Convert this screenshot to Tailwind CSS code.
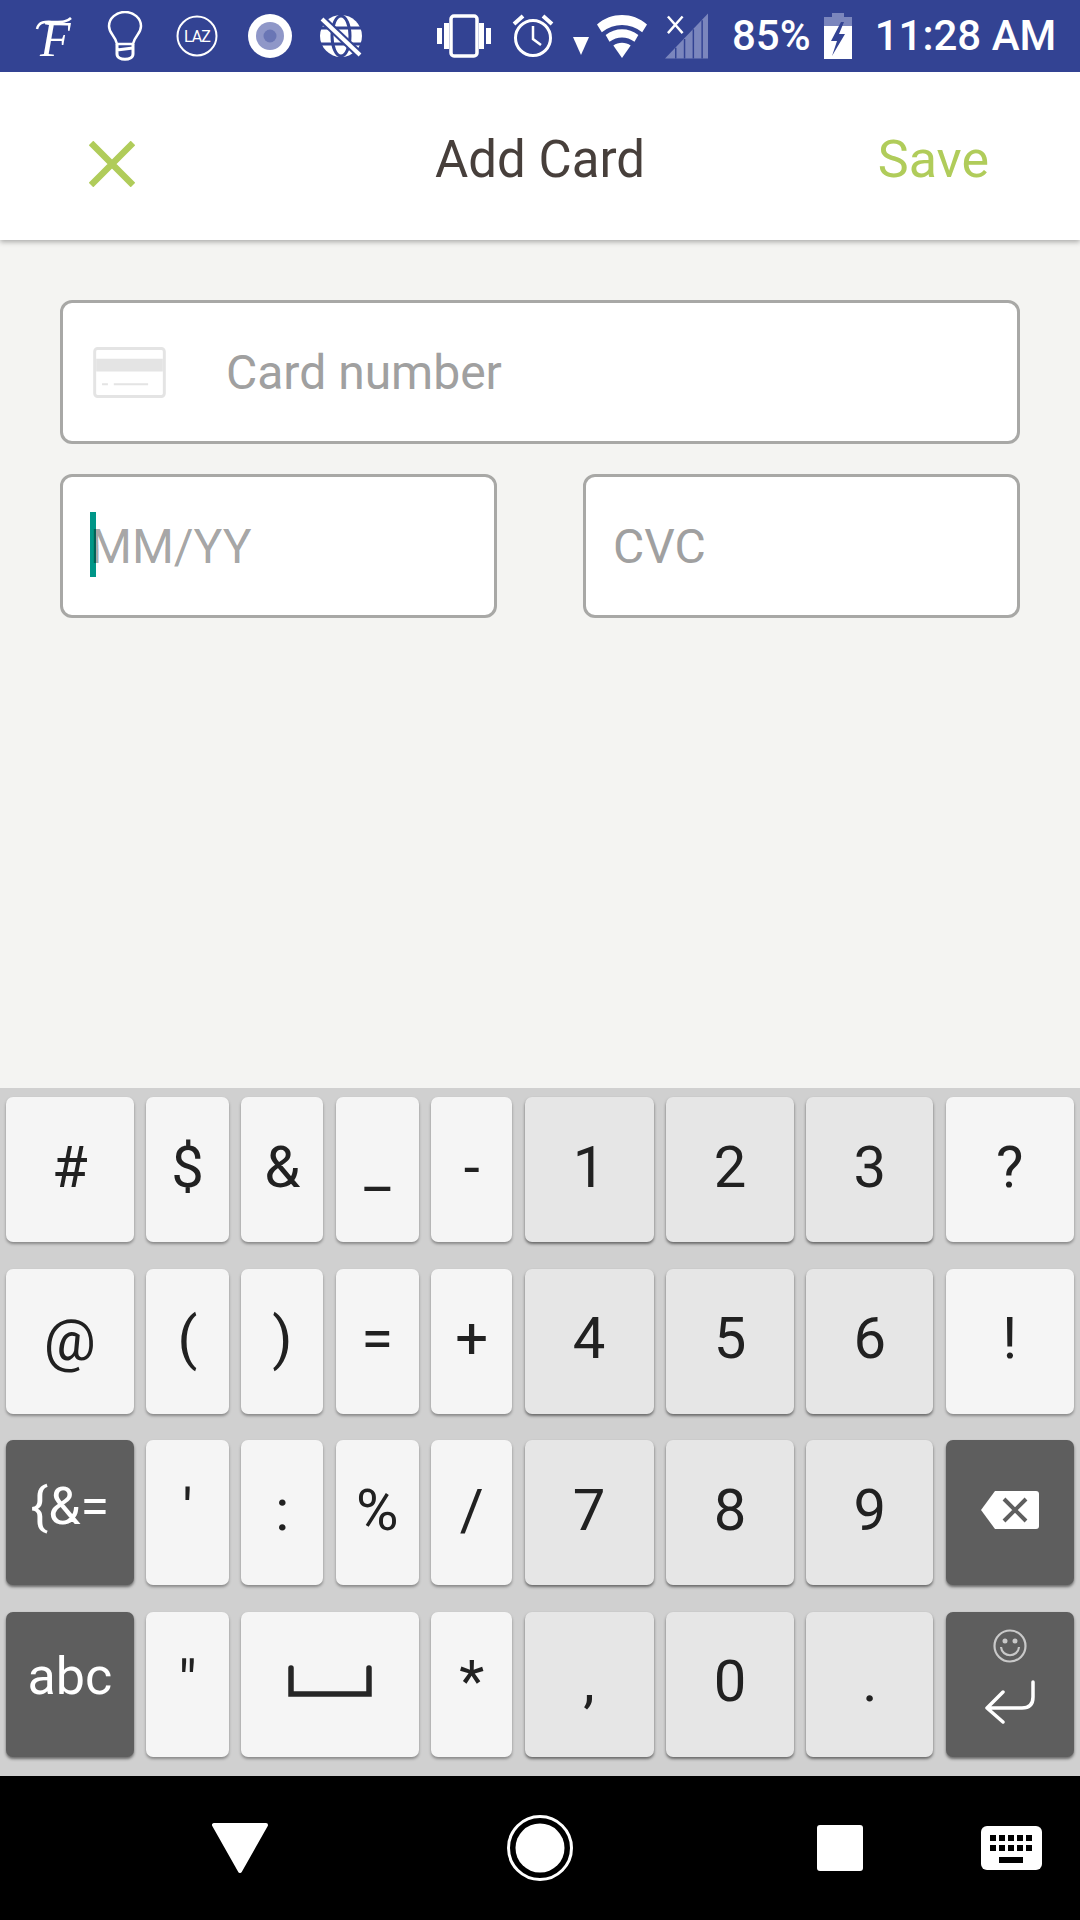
<!DOCTYPE html>
<html><head><meta charset="utf-8"><script src="https://cdn.jsdelivr.net/npm/@tailwindcss/browser@4"></script></head>
<body class="m-0 font-['Roboto',sans-serif]">
<div class="w-[1080px] h-[1920px] flex flex-col bg-[#f4f4f2] overflow-hidden">
  <!-- status bar -->
  <div class="h-[72px] bg-[#334393] flex items-center text-white relative z-20 shrink-0">
    <svg class="ml-[34px] mt-[6px]" width="44" height="60" viewBox="0 0 44 60"><text x="6" y="47" fill="#fff" font-family="Liberation Serif" font-style="italic" font-size="50">F</text><path d="M3 20C5 11 14 13 21 13C28 13 33 13 37 9" fill="none" stroke="#fff" stroke-width="2.5"/></svg>
    <svg class="ml-[28px]" width="38" height="50" viewBox="0 0 38 50" fill="none" stroke="#fff" stroke-width="3"><path d="M11 33C9 24 3 23 3 15A16 14 0 0 1 35 15C35 23 29 24 27 33Z" stroke-width="2.5"/><path d="M11 33V43C11 50 27 50 27 43V33M11 39L27 37"/></svg>
    <svg class="ml-[32px]" width="42" height="42" viewBox="0 0 42 42"><circle cx="21" cy="21" r="19.5" fill="none" stroke="#fff" stroke-width="2"/><text x="21" y="27" text-anchor="middle" fill="#fff" font-family="Roboto" font-size="16" letter-spacing="-1">LAZ</text></svg>
    <svg class="ml-[30px]" width="44" height="44" viewBox="0 0 44 44"><circle cx="22" cy="22" r="22" fill="#fff"/><circle cx="22" cy="22" r="14" fill="#8f97c8"/><circle cx="22" cy="22" r="6.5" fill="#6a76b5"/></svg>
    <svg class="ml-[27px]" width="44" height="44" viewBox="0 0 44 44"><circle cx="22" cy="22" r="21" fill="#fff"/><g fill="none" stroke="#334393" stroke-width="3"><ellipse cx="22" cy="22" rx="9" ry="20"/><path d="M2 14H42M2 30H42"/></g><path d="M3 5L41 41" stroke="#334393" stroke-width="8"/><path d="M3 5L41 41" stroke="#fff" stroke-width="4"/></svg>
    <svg class="ml-[74px]" width="54" height="44" viewBox="0 0 54 44"><rect x="14" y="2" width="26" height="40" rx="3" fill="none" stroke="#fff" stroke-width="3.5"/><path d="M0 14H5V30H0ZM7 9H12V35H7ZM42 9H47V35H42ZM49 14H54V30H49Z" fill="#fff"/></svg>
    <svg class="ml-[21px]" width="42" height="46" viewBox="0 0 42 46" fill="none" stroke="#fff" stroke-width="3"><circle cx="21" cy="25" r="17.5"/><path d="M21 13V26L29 32" stroke-width="2.5"/><path d="M2 11L11 3M40 11L31 3" stroke-width="4"/></svg>
    <svg class="ml-[19px] mt-[20px]" width="16" height="18" viewBox="0 0 16 18"><path d="M0 0H16L8 18Z" fill="#fff"/></svg>
    <svg class="ml-[8px]" width="50" height="46" viewBox="0 0 52 46"><path d="M0 11C15 -2 37 -2 52 11L47 19C34 9 18 9 5 19Z" fill="#fff"/><path d="M9 22C19 14 33 14 43 22L39 29C31 23 21 23 13 29Z" fill="#fff"/><path d="M17 33C22 29 30 29 35 33L26 46Z" fill="#fff"/></svg>
    <svg class="ml-[18px]" width="43" height="46" viewBox="0 0 44 46"><path d="M0 46L44 0V46Z" fill="#7b86bd"/><path d="M11 46V35M20 46V26M29 46V16M38 46V7" stroke="#334393" stroke-width="1.5"/><path d="M3 3L18 20M18 3L3 20" stroke="#fff" stroke-width="2.5"/></svg>
    <span class="ml-[24px] text-[42px] font-medium leading-none">85%</span>
    <svg class="ml-[13px]" width="28" height="46" viewBox="0 0 28 46"><path d="M8 0H20V4H28V13H0V4H8Z" fill="#7b86bd"/><path d="M0 13H28V46H0Z" fill="#fff"/><path d="M17 9L7 28H13L8 43L21 21H15L20 9Z" fill="#334393"/></svg>
    <span class="ml-[23px] text-[42px] font-medium leading-none whitespace-nowrap">11:28 AM</span>
  </div>
  <!-- header -->
  <div class="h-[168px] bg-white grid grid-cols-[1fr_auto_1fr] items-center shadow-[0_2px_5px_rgba(0,0,0,0.3)] relative z-10 shrink-0">
    <svg class="ml-[89px] mt-[16px]" width="46" height="46" viewBox="0 0 46 46"><path d="M2 2L44 44M44 2L2 44" stroke="#b0cc5a" stroke-width="6.5"/></svg>
    <span class="text-[51px] leading-none text-[#473f3b] mt-[6px]">Add Card</span>
    <span class="text-[52px] leading-none text-[#b0cc5a] justify-self-end mr-[91px] mt-[8px]">Save</span>
  </div>
  <!-- form -->
  <div class="flex-1 px-[60px] pt-[60px] flex flex-col gap-[30px]">
    <div class="h-[144px] bg-white border-[3px] border-[#a8a8a6] rounded-[12px] flex items-center">
      <svg class="ml-[30px]" width="73" height="51" viewBox="0 0 74 52"><rect x="1.5" y="1.5" width="71" height="49" rx="3" fill="#fff" stroke="#e4e4e4" stroke-width="3"/><path d="M3 12H71V25H3ZM9 37H15V39H9ZM21 37H56V39H21Z" fill="#e4e4e4"/></svg>
      <span class="ml-[60px] mt-[2px] text-[48px] leading-none text-[#a0a0a0]">Card number</span>
    </div>
    <div class="flex justify-between">
      <div class="w-[437px] h-[144px] bg-white border-[3px] border-[#a8a8a6] rounded-[12px] flex items-center relative">
        <span class="ml-[27px] mt-[2px] relative z-10 text-[48px] leading-none text-black/[0.37]">MM/YY</span>
        <div class="absolute left-[27px] top-[35px] w-[6px] h-[65px] bg-[#009688]"></div>
      </div>
      <div class="w-[437px] h-[144px] bg-white border-[3px] border-[#a8a8a6] rounded-[12px] flex items-center">
        <span class="ml-[27px] mt-[2px] text-[48px] leading-none text-[#a0a0a0]">CVC</span>
      </div>
    </div>
  </div>
  <!-- keyboard -->
  <div class="h-[688px] bg-[#d0d0d0] pl-[6px] pt-[9px] shrink-0 grid grid-cols-[127.6px_83px_82px_83px_81px_129px_128px_127px_128px] grid-rows-[145px_145px_145px_145px] gap-x-[12.4px] gap-y-[26.5px] text-[#212121] text-[58px] leading-none">
    <div class="bg-[#f5f5f5] rounded-[7px] shadow-[0_2px_3px_rgba(0,0,0,0.35)] flex items-center justify-center pb-[6px]">#</div>
    <div class="bg-[#f5f5f5] rounded-[7px] shadow-[0_2px_3px_rgba(0,0,0,0.35)] flex items-center justify-center pb-[6px]">$</div>
    <div class="bg-[#f5f5f5] rounded-[7px] shadow-[0_2px_3px_rgba(0,0,0,0.35)] flex items-center justify-center pb-[6px]">&amp;</div>
    <div class="bg-[#f5f5f5] rounded-[7px] shadow-[0_2px_3px_rgba(0,0,0,0.35)] flex items-center justify-center pb-[6px]">_</div>
    <div class="bg-[#f5f5f5] rounded-[7px] shadow-[0_2px_3px_rgba(0,0,0,0.35)] flex items-center justify-center pb-[6px]">-</div>
    <div class="bg-[#e6e6e6] rounded-[7px] shadow-[0_2px_3px_rgba(0,0,0,0.5)] flex items-center justify-center pb-[6px]">1</div>
    <div class="bg-[#e6e6e6] rounded-[7px] shadow-[0_2px_3px_rgba(0,0,0,0.5)] flex items-center justify-center pb-[6px]">2</div>
    <div class="bg-[#e6e6e6] rounded-[7px] shadow-[0_2px_3px_rgba(0,0,0,0.5)] flex items-center justify-center pb-[6px]">3</div>
    <div class="bg-[#f5f5f5] rounded-[7px] shadow-[0_2px_3px_rgba(0,0,0,0.35)] flex items-center justify-center pb-[6px]">?</div>

    <div class="bg-[#f5f5f5] rounded-[7px] shadow-[0_2px_3px_rgba(0,0,0,0.35)] flex items-center justify-center pb-[2px]">@</div>
    <div class="bg-[#f5f5f5] rounded-[7px] shadow-[0_2px_3px_rgba(0,0,0,0.35)] flex items-center justify-center pb-[6px]">(</div>
    <div class="bg-[#f5f5f5] rounded-[7px] shadow-[0_2px_3px_rgba(0,0,0,0.35)] flex items-center justify-center pb-[6px]">)</div>
    <div class="bg-[#f5f5f5] rounded-[7px] shadow-[0_2px_3px_rgba(0,0,0,0.35)] flex items-center justify-center pb-[6px]">=</div>
    <div class="bg-[#f5f5f5] rounded-[7px] shadow-[0_2px_3px_rgba(0,0,0,0.35)] flex items-center justify-center pb-[6px]">+</div>
    <div class="bg-[#e6e6e6] rounded-[7px] shadow-[0_2px_3px_rgba(0,0,0,0.5)] flex items-center justify-center pb-[6px]">4</div>
    <div class="bg-[#e6e6e6] rounded-[7px] shadow-[0_2px_3px_rgba(0,0,0,0.5)] flex items-center justify-center pb-[6px]">5</div>
    <div class="bg-[#e6e6e6] rounded-[7px] shadow-[0_2px_3px_rgba(0,0,0,0.5)] flex items-center justify-center pb-[6px]">6</div>
    <div class="bg-[#f5f5f5] rounded-[7px] shadow-[0_2px_3px_rgba(0,0,0,0.35)] flex items-center justify-center pb-[6px]">!</div>

    <div class="bg-[#5e5e5e] rounded-[7px] shadow-[0_2px_3px_rgba(0,0,0,0.5)] flex items-center justify-center pb-[12px] text-white text-[52px]">{&amp;=</div>
    <div class="bg-[#f5f5f5] rounded-[7px] shadow-[0_2px_3px_rgba(0,0,0,0.35)] flex items-center justify-center pb-[6px]">'</div>
    <div class="bg-[#f5f5f5] rounded-[7px] shadow-[0_2px_3px_rgba(0,0,0,0.35)] flex items-center justify-center pb-[6px]">:</div>
    <div class="bg-[#f5f5f5] rounded-[7px] shadow-[0_2px_3px_rgba(0,0,0,0.35)] flex items-center justify-center pb-[6px]">%</div>
    <div class="bg-[#f5f5f5] rounded-[7px] shadow-[0_2px_3px_rgba(0,0,0,0.35)] flex items-center justify-center pb-[6px]">/</div>
    <div class="bg-[#e6e6e6] rounded-[7px] shadow-[0_2px_3px_rgba(0,0,0,0.5)] flex items-center justify-center pb-[6px]">7</div>
    <div class="bg-[#e6e6e6] rounded-[7px] shadow-[0_2px_3px_rgba(0,0,0,0.5)] flex items-center justify-center pb-[6px]">8</div>
    <div class="bg-[#e6e6e6] rounded-[7px] shadow-[0_2px_3px_rgba(0,0,0,0.5)] flex items-center justify-center pb-[6px]">9</div>
    <div class="bg-[#5e5e5e] rounded-[7px] shadow-[0_2px_3px_rgba(0,0,0,0.5)] flex items-center justify-center pb-[6px]">
      <svg width="60" height="40" viewBox="0 0 60 40"><path d="M15 1H56A3 3 0 0 1 59 4V36A3 3 0 0 1 56 39H15L1 20Z" fill="#fff"/><path d="M24 9L46 31M46 9L24 31" stroke="#5e5e5e" stroke-width="4"/></svg>
    </div>

    <div class="bg-[#5e5e5e] rounded-[7px] shadow-[0_2px_3px_rgba(0,0,0,0.5)] flex items-center justify-center pb-[14px] text-white text-[52px]">abc</div>
    <div class="bg-[#f5f5f5] rounded-[7px] shadow-[0_2px_3px_rgba(0,0,0,0.35)] flex items-center justify-center pb-[6px]">"</div>
    <div class="col-span-2 bg-[#f5f5f5] rounded-[7px] shadow-[0_2px_3px_rgba(0,0,0,0.35)] flex items-center justify-center pb-[6px]">
      <svg width="84" height="32" viewBox="0 0 84 32" fill="none" stroke="#262626" stroke-width="5.5" stroke-linecap="round"><path d="M3 3V29H81V3"/></svg>
    </div>
    <div class="bg-[#f5f5f5] rounded-[7px] shadow-[0_2px_3px_rgba(0,0,0,0.35)] flex items-center justify-center pb-[6px]">*</div>
    <div class="bg-[#e6e6e6] rounded-[7px] shadow-[0_2px_3px_rgba(0,0,0,0.5)] flex items-center justify-center pb-[6px]">,</div>
    <div class="bg-[#e6e6e6] rounded-[7px] shadow-[0_2px_3px_rgba(0,0,0,0.5)] flex items-center justify-center pb-[6px]">0</div>
    <div class="bg-[#e6e6e6] rounded-[7px] shadow-[0_2px_3px_rgba(0,0,0,0.5)] flex items-center justify-center pb-[6px]">.</div>
    <div class="bg-[#5e5e5e] rounded-[7px] shadow-[0_2px_3px_rgba(0,0,0,0.5)] flex flex-col items-center pt-[17px] gap-[17px]">
      <svg width="34" height="34" viewBox="0 0 34 34" fill="none" stroke="#c9c9c9" stroke-width="2.2"><circle cx="17" cy="17" r="15.5"/><path d="M8 18C9 29 25 29 26 18"/><circle cx="12" cy="12" r="1.4" fill="#c9c9c9"/><circle cx="22" cy="12" r="1.4" fill="#c9c9c9"/></svg>
      <svg width="52" height="44" viewBox="0 0 52 44" fill="none" stroke="#fff" stroke-width="3.5" stroke-linecap="round" stroke-linejoin="round"><path d="M49 2V17Q49 28 38 28H3M19 12L3 28L19 42"/></svg>
    </div>
  </div>
  <!-- nav bar -->
  <div class="h-[144px] bg-black flex items-center shrink-0">
    <svg class="ml-[211px]" width="58" height="52" viewBox="0 0 58 52"><path d="M3 3H55L29 49Z" fill="#fff" stroke="#fff" stroke-width="4" stroke-linejoin="round"/></svg>
    <svg class="ml-[238px]" width="66" height="66" viewBox="0 0 66 66"><circle cx="33" cy="33" r="31.5" fill="none" stroke="#fff" stroke-width="3"/><circle cx="33" cy="33" r="24.5" fill="#fff"/></svg>
    <div class="ml-[244px] w-[46px] h-[46px] bg-white rounded-[3px]"></div>
    <svg class="ml-[118px]" width="61" height="44" viewBox="0 0 61 44"><rect width="61" height="44" rx="6" fill="#fff"/><path d="M9 9H15V15H9ZM18 9H24V15H18ZM27 9H33V15H27ZM36 9H42V15H36ZM45 9H51V15H45ZM9 19H15V25H9ZM18 19H24V25H18ZM27 19H33V25H27ZM36 19H42V25H36ZM45 19H51V25H45ZM18 31H42V37H18Z" fill="#000"/></svg>
  </div>
</div>
</body></html>
